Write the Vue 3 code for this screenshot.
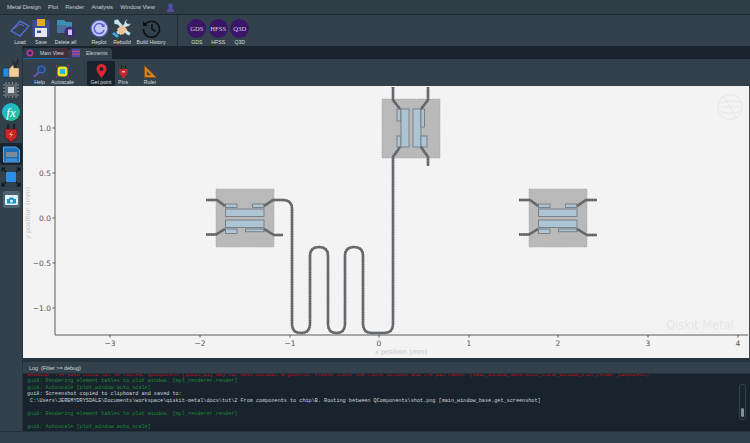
<script setup>
const menus = ['Metal Design', 'Plot', 'Render', 'Analysis', 'Window View']
const xTicks = [[110, '−3'], [200, '−2'], [290, '−1'], [379, '0'], [469, '1'], [558, '2'], [648, '3'], [738, '4']]
const yTicks = [[128, '1.0'], [173, '0.5'], [218, '0.0'], [263, '−0.5'], [308, '−1.0']]
const hQubits = [0, 313]
const route = 'M264 206L273 200H283Q292 200 292 209V324Q292 333 301 333Q310 333 310 324V256Q310 247 319 247Q328 247 328 256V324Q328 333 336.500 333Q345 333 345 324V256Q345 247 354 247Q363 247 363 256V324Q363 333 372 333H384Q393 333 393 324V157L400 147'
const leads = ['M206 200H217L225 206', 'M206 234.500H216L225 229', 'M264 229L274 235H283']
const leadsRight = ['M519 200H530L538 206', 'M519 234.500H529L538 229', 'M577 229L587 235H597', 'M577 206L586 200H597']
const leadsTop = ['M393 87V100L400 109', 'M428 87V100L421 109', 'M421 147L428 157V166']
const allLeads = [route, ...leads, ...leadsRight, ...leadsTop]
const logLines = [
  { c: 'err', t: 'WARNING  The path could not be routed: QComponent [qubit_q1] may not meet minimal arguments. Please check the route options and the pin names: [main_window_base.auto_scale_window_plot_render_component]' },
  { c: 'ok', t: 'gui8: Rendering element tables to plot window. [mpl_renderer.render]' },
  { c: 'ok', t: 'gui8: Autoscale [plot_window.auto_scale]' },
  { c: 'plain', t: 'gui8: Screenshot copied to clipboard and saved to:' },
  { c: 'plain', t: ' C:\\Users\\JEREMYDRYSDALE\\Documents\\workspace\\qiskit-metal\\docs\\tut\\2 From components to chip\\B. Routing between QComponents\\shot.png [main_window_base.get_screenshot]' },
  { c: 'plain', t: '\u00a0' },
  { c: 'ok', t: 'gui8: Rendering element tables to plot window. [mpl_renderer.render]' },
  { c: 'plain', t: '\u00a0' },
  { c: 'ok', t: 'gui8: Autoscale [plot_window.auto_scale]' }
]
</script>

<template>
  <div class="app">
    <nav class="menubar">
      <span v-for="m in menus" :key="m" class="menu">{{ m }}</span>
      <svg class="menu-icon" width="9" height="9" viewBox="0 0 9 9"><circle cx="4.500" cy="3" r="2.400" fill="#4a55a8"/><path d="M1 9Q1 5 4.500 5T8 9Z" fill="#5a4aa0"/></svg>
    </nav>

    <header class="toolbar">
      <div class="tool w21">
        <svg width="20" height="19" viewBox="0 0 20 19"><path d="M1 12L10 2L19 7L10 17Z" fill="none" stroke="#4f6ad0" stroke-width="1.500"/><path d="M4 10L10 5L14 7" fill="none" stroke="#7f62d8"/></svg>
        <span>Load</span>
      </div>
      <div class="tool w21">
        <svg width="18" height="19" viewBox="0 0 18 19"><rect x="0.500" y="1" width="17" height="17" rx="1" fill="#3f4c98"/><rect x="5" y="0" width="8" height="7" fill="#e5a92a"/><rect x="3" y="9" width="12" height="9" fill="#e6e8f2"/><rect x="5" y="11.500" width="4" height="2.500" fill="#3f4c98"/></svg>
        <span>Save</span>
      </div>
      <div class="tool w28">
        <svg width="20" height="19" viewBox="0 0 20 19"><path d="M1 1H8L10 3H16V12H1Z" fill="#3b8fb0"/><path d="M1 14V6H11V14Z" fill="#4a6f9a"/><circle cx="14" cy="13" r="5.500" fill="#3d2a78"/><rect x="12" y="10.500" width="4" height="5.500" fill="#c9c3e8"/></svg>
        <span>Delete all</span>
      </div>
      <div class="tool w24 gap-left">
        <svg width="19" height="19" viewBox="0 0 19 19"><circle cx="9.500" cy="9.500" r="9" fill="#5a5cb0"/><circle cx="9.500" cy="9.500" r="7.800" fill="#c7caf0"/><path d="M13.500 7A5 5 0 1 0 14 11" fill="none" stroke="#4f63d8" stroke-width="1.500"/><path d="M14.500 4.500V8H11Z" fill="#4f63d8"/></svg>
        <span>Replot</span>
      </div>
      <div class="tool w22">
        <svg width="20" height="20" viewBox="0 0 20 20"><path d="M2 2L6 1L8 4L16 13L19 15L17 18L14 16L6 7L2 6Z" fill="#bfe6f2" stroke="#20303c" stroke-width="0.500"/><path d="M16 1Q12 2 12 6L4 14L6 17L14 9Q18 9 19 5L16 6L14 4Z" fill="#cfe2ea" stroke="#20303c" stroke-width="0.500"/><path d="M5 11L10 7L15 11L12 16L8 17Z" fill="#eec39a"/><path d="M2 14L7 18L5 20L0 16Z" fill="#39a8e8"/></svg>
        <span>Rebuild</span>
      </div>
      <div class="tool w36">
        <svg width="19" height="19" viewBox="0 0 19 19"><path d="M3.500 5A8 8 0 1 1 1.500 10" fill="none" stroke="#0c0f12" stroke-width="1.600"/><path d="M1 2L6 7H1Z" fill="#0c0f12"/><path d="M10 5V10L13.500 12.500" fill="none" stroke="#0c0f12" stroke-width="1.500"/></svg>
        <span>Build History</span>
      </div>
      <div class="sep"></div>
      <div class="tool w215"><div class="disc">GDS</div><span>GDS</span></div>
      <div class="tool w215"><div class="disc">HFSS</div><span>HFSS</span></div>
      <div class="tool w215"><div class="disc">Q3D</div><span>Q3D</span></div>
    </header>

    <div class="body">
      <aside class="sidebar">
        <div class="side-item thumb">
          <svg width="17" height="20" viewBox="0 0 17 20"><path d="M10 0V3L12 4.500L14 3V0L16 2V5L14 7V11H11V7L9 5V2Z" fill="#262d34"/><rect x="0" y="10" width="6" height="9" fill="#1c8fe0" stroke="#123" stroke-width="0.500"/><path d="M6 11L10 7L11 10H16V19H6Z" fill="#f2cf9a" stroke="#6e5238" stroke-width="0.500"/></svg>
        </div>
        <div class="side-item chip">
          <svg width="16" height="16" viewBox="0 0 16 16"><path d="M0 3H16M0 6H16M0 9.500H16M0 13H16M3 0V16M6 0V16M9.500 0V16M13 0V16" stroke="#8a8f94" stroke-width="1"/><rect x="2" y="2" width="12" height="12" fill="#5f666c"/><rect x="5" y="5" width="6" height="6" fill="#d6d9dc"/></svg>
        </div>
        <div class="side-item fx">
          <svg width="18" height="18" viewBox="0 0 18 18"><defs><linearGradient id="fxg" x1="0" y1="0" x2="1" y2="1"><stop offset="0" stop-color="#1fb6e0"/><stop offset="1" stop-color="#22c48a"/></linearGradient></defs><circle cx="9" cy="9" r="9" fill="url(#fxg)"/><text x="9" y="13.500" text-anchor="middle" class="fx-text">fx</text></svg>
        </div>
        <div class="side-item plug">
          <svg width="14" height="18" viewBox="0 0 14 18"><path d="M4 0V5M10 0V5" stroke="#222" stroke-width="2.200"/><path d="M1 5H13V14L9 16V18H5V16L1 14Z" fill="#c8242a" stroke="#3a1518" stroke-width="0.600"/><path d="M8 7L5 11H7L6 14L9 10H7Z" fill="#f0c040"/></svg>
        </div>
        <div class="side-item active">
          <svg width="17" height="17" viewBox="0 0 17 17"><path d="M0.500 1H13L16.500 4V16H0.500Z" fill="#1e6fb8" stroke="#5aa8e8"/><rect x="3" y="6" width="11" height="5" fill="#7c8b98"/><rect x="3" y="12.500" width="11" height="3" fill="#3d8fd8"/></svg>
        </div>
        <div class="side-item move">
          <svg width="20" height="20" viewBox="0 0 20 20"><path d="M1 1L6 6M19 1L14 6M1 19L6 14M19 19L14 14" stroke="#10171e" stroke-width="1.300"/><path d="M0.500 0.500H5L0.500 5ZM19.500 0.500H15L19.500 5ZM0.500 19.500H5L0.500 15ZM19.500 19.500H15L19.500 15Z" fill="#10171e"/><rect x="5" y="5" width="10" height="10" fill="#2a8ee8"/></svg>
        </div>
        <div class="side-item cam">
          <svg width="17" height="17" viewBox="0 0 17 17"><rect width="17" height="17" rx="2" fill="#4f6270"/><rect x="2" y="4" width="13" height="10" rx="1" fill="#dff2f8"/><path d="M4 8H6L7 6.500H10L11 8H13V12.500H4Z" fill="#1a93c8"/><circle cx="8.500" cy="10" r="1.500" fill="#dff2f8"/></svg>
        </div>
      </aside>

      <main class="main">
        <div class="tabs">
          <div class="tab tab-on">
            <svg width="8" height="8" viewBox="0 0 8 8"><circle cx="4" cy="4" r="3.500" fill="#b03a8f"/><circle cx="4" cy="4" r="1.800" fill="#3d2060"/></svg>
            <span>Main View</span>
          </div>
          <div class="tab">
            <svg width="8" height="8" viewBox="0 0 8 8"><rect width="8" height="8" fill="#5a4ab0"/><path d="M0 2.500H8M0 5.200H8" stroke="#c04a6a"/></svg>
            <span>Elements</span>
          </div>
        </div>

        <div class="plotbar">
          <div class="ptool w23">
            <svg width="13" height="13" viewBox="0 0 13 13"><circle cx="8.500" cy="4.500" r="3.400" fill="#26457a" stroke="#3f6ac8" stroke-width="1.400"/><path d="M6 7L1 12" stroke="#6f4fb0" stroke-width="2"/></svg>
            <span>Help</span>
          </div>
          <div class="ptool w23">
            <svg width="13" height="13" viewBox="0 0 13 13"><path d="M0 2.500V0H2.500M10.500 0H13V2.500M13 10.500V13H10.500M2.500 13H0V10.500" fill="none" stroke="#a53a78" stroke-width="1.200"/><rect x="1.500" y="1.500" width="10" height="10" rx="3" fill="#f0e020"/><rect x="4" y="4" width="5" height="5" fill="#22b8e8"/></svg>
            <span>Autoscale</span>
          </div>
          <div class="ptool w28 selected">
            <svg width="11" height="14" viewBox="0 0 11 14"><path d="M5.500 14Q0.500 7.500 0.500 5A5 5 0 0 1 10.500 5Q10.500 7.500 5.500 14Z" fill="#e8222e"/><circle cx="5.500" cy="5" r="1.900" fill="#19232d"/></svg>
            <span>Get point</span>
          </div>
          <div class="ptool w16">
            <svg width="9" height="13" viewBox="0 0 9 13"><path d="M2.500 0V4M6.500 0V4" stroke="#222" stroke-width="1.400"/><path d="M0.500 4H8.500V9L6 11V13H3V11L0.500 9Z" fill="#c22a30"/><rect x="3" y="6" width="3" height="1.500" fill="#eab"/></svg>
            <span>Pins</span>
          </div>
          <div class="ptool w38">
            <svg width="13" height="13" viewBox="0 0 13 13"><path d="M0.500 0.500V12.500H12.500ZM3 6.500V10H6.500Z" fill="#d98420" fill-rule="evenodd" stroke="#7a4a10" stroke-width="0.500"/></svg>
            <span>Ruler</span>
          </div>
        </div>

        <div class="plot">
          <svg class="figure" width="726" height="272" viewBox="23 86 726 272">
            <text x="30" y="213" class="axis-title" text-anchor="middle" transform="rotate(-90 30 213)">y position (mm)</text>
            <text x="401" y="354" class="axis-title" text-anchor="middle">x position (mm)</text>
            <text x="734" y="329" class="watermark" text-anchor="end">Qiskit Metal</text>

            <g class="globe">
              <circle cx="730" cy="107" r="12.500"/>
              <path d="M718 103Q730 99 742 103M718 111Q730 115 742 111M719 107H741M724 96L736 118"/>
            </g>

            <path d="M55 86V335H748" fill="none" stroke="#5c5c5c" stroke-width="1"/>
            <g v-for="t in xTicks" :key="t[1]">
              <path :d="`M${t[0]} 335v2.500`" stroke="#555"/>
              <text :x="t[0]" y="345.500" class="tick" text-anchor="middle">{{ t[1] }}</text>
            </g>
            <g v-for="t in yTicks" :key="t[1]">
              <path :d="`M55 ${t[0]}h-2.500`" stroke="#555"/>
              <text x="51" :y="t[0] + 2.700" class="tick" text-anchor="end">{{ t[1] }}</text>
            </g>

            <g v-for="dx in hQubits" :key="dx" :transform="`translate(${dx} 0)`">
              <rect x="216" y="189" width="58" height="58" class="pocket"/>
              <rect x="225.500" y="204" width="11.500" height="3.500" class="pad"/>
              <rect x="252.500" y="204" width="11.500" height="3.500" class="pad"/>
              <rect x="225.500" y="209" width="38.500" height="7.500" class="pad"/>
              <rect x="225.500" y="220" width="38.500" height="7.500" class="pad"/>
              <rect x="225.500" y="229" width="11.500" height="4.500" class="pad"/>
              <rect x="245.500" y="229" width="18.500" height="2.800" class="pad"/>
            </g>
            <rect x="382" y="99" width="58" height="59" class="pocket"/>
            <rect x="397" y="109" width="4" height="12" class="pad"/>
            <rect x="397" y="136" width="4" height="11" class="pad"/>
            <rect x="401" y="109" width="8" height="38" class="pad"/>
            <rect x="413" y="109" width="8" height="38" class="pad"/>
            <rect x="421" y="109" width="3.500" height="18" class="pad"/>
            <rect x="421" y="136" width="6" height="11" class="pad"/>

            <g fill="none">
              <path v-for="(d, i) in allLeads" :key="'a' + i" :d="d" class="wire"/>
              <path v-for="(d, i) in allLeads" :key="'b' + i" :d="d" class="wire-dash"/>
            </g>
          </svg>
        </div>

        <div class="strip"></div>
        <div class="loghead"><span>Log&nbsp; (Filter &gt;= debug)</span></div>
        <div class="logbody">
          <div class="loglines">
            <div v-for="(l, i) in logLines" :key="i" class="logline" :class="l.c">{{ l.t }}</div>
          </div>
          <div class="scroll"><div class="thumbbar"></div></div>
        </div>
      </main>
    </div>
    <footer class="status"></footer>
  </div>
</template>

<style>
html, body { margin: 0; background: #32414b; }
</style>

<style scoped>
.app {
  width: 750px;
  height: 443px;
  overflow: hidden;
  display: flex;
  flex-direction: column;
  background: #32414b;
  font-family: "Liberation Sans", Arial, sans-serif;
  color: #e0e1e3;
}
.menubar {
  height: 14px;
  flex: none;
  display: flex;
  align-items: center;
  padding-left: 7px;
  gap: 7.200px;
  font-size: 5.800px;
  color: #c9ced2;
  background: #2f3d47;
}
.menu-icon { margin-left: 4px; }
.toolbar {
  height: 32px;
  flex: none;
  display: flex;
  padding-left: 9.500px;
  box-sizing: border-box;
  border-top: 1px solid #1f2a33;
  background: #32414b;
}
.tool, .ptool {
  display: flex;
  flex-direction: column;
  align-items: center;
  justify-content: flex-end;
  font-size: 5.200px;
  line-height: 6px;
  color: #d9dcdf;
  gap: 1px;
  padding-bottom: 1px;
  box-sizing: border-box;
  white-space: nowrap;
}
.w21 { width: 21px; }
.w22 { width: 22px; }
.w24 { width: 24px; }
.w28 { width: 28px; }
.w36 { width: 36px; }
.w215 { width: 21.500px; }
.w23 { width: 23px; }
.w16 { width: 16px; }
.w38 { width: 38px; }
.gap-left { margin-left: 7.500px; }
.sep {
  width: 1px;
  margin: 0 8px;
  background: #1f2a33;
}
.disc {
  width: 19px;
  height: 19px;
  border-radius: 50%;
  background: #3b1668;
  color: #d8d0e4;
  font-family: "Liberation Serif", serif;
  font-size: 6.600px;
  display: flex;
  align-items: center;
  justify-content: center;
}
.body {
  flex: 1;
  display: flex;
  min-height: 0;
}
.sidebar {
  width: 23px;
  flex: none;
  display: flex;
  flex-direction: column;
  align-items: center;
  padding-top: 11px;
  box-sizing: border-box;
  background: #32414b;
  border-right: 1px solid #26323b;
}
.side-item {
  display: flex;
  justify-content: center;
  align-items: center;
  width: 22px;
}
.thumb { height: 21px; }
.chip { height: 23px; }
.fx { height: 21px; }
.plug { height: 21px; }
.active {
  height: 22px;
  background: #19232d;
  border-radius: 2px;
}
.move { height: 23px; }
.cam { height: 22px; }
.fx-text {
  font-family: "Liberation Serif", serif;
  font-style: italic;
  font-size: 13px;
  fill: #fff;
}
.main {
  flex: 1;
  min-width: 0;
  display: flex;
  flex-direction: column;
}
.tabs {
  height: 13px;
  flex: none;
  display: flex;
  align-items: flex-end;
  background: #19232d;
}
.tab {
  height: 11.500px;
  width: 43px;
  display: flex;
  align-items: center;
  gap: 6px;
  padding-left: 3px;
  box-sizing: border-box;
  font-size: 5.200px;
  background: #32414b;
  border-radius: 3px 3px 0 0;
  color: #cfd3d6;
}
.tab-on {
  width: 46px;
  background: linear-gradient(90deg, #2c3a45 50%, #4a2a38 100%);
  border-bottom: 1.500px solid #1464a0;
}
.plotbar {
  height: 27px;
  flex: none;
  display: flex;
  padding: 1px 0 0 5px;
  box-sizing: border-box;
  background: #32414b;
}
.selected {
  background: #19232d;
  border-radius: 2px;
  margin: 1px 0 0 13px;
}
.plot {
  height: 272px;
  flex: none;
  background: #f3f3f3;
  border-right: 1px solid #3a4853;
}
.figure { display: block; }
.globe {
  fill: none;
  stroke: #e8e8e8;
  stroke-width: 1;
}
.axis-title {
  font-family: "DejaVu Sans", sans-serif;
  font-size: 6.600px;
  fill: #c4c4c4;
}
.tick {
  font-family: "DejaVu Sans", sans-serif;
  font-size: 7.500px;
  fill: #555;
}
.watermark {
  font-family: "DejaVu Sans", sans-serif;
  font-size: 11.500px;
  fill: #e6e6e6;
}
.pocket {
  fill: #b9b9b9;
  stroke: #a6a6a6;
  stroke-width: 0.700;
  stroke-dasharray: 1.500 1;
}
.pad {
  fill: #adc4d4;
  stroke: #6a7379;
  stroke-width: 0.800;
}
.wire {
  stroke: #6a6e72;
  stroke-width: 2.500;
}
.wire-dash {
  stroke: #606367;
  stroke-width: 2.500;
  stroke-dasharray: 1 1.400;
}
.strip {
  height: 4px;
  flex: none;
  background: #26333d;
}
.loghead {
  height: 12px;
  flex: none;
  display: flex;
  align-items: center;
  padding-left: 6px;
  font-size: 5.400px;
  color: #d5d8db;
  background: #32414b;
  border-bottom: 1px solid #26323b;
  box-sizing: border-box;
}
.logbody {
  height: 57px;
  flex: none;
  display: flex;
  justify-content: space-between;
  background: #19232d;
  overflow: hidden;
}
.loglines {
  margin-top: -2px;
  padding-left: 4px;
  font-family: "Liberation Mono", monospace;
  font-size: 5.170px;
  line-height: 6.450px;
  white-space: pre;
  width: 700px;
}
.logline { height: 6.450px; }
.err { color: #c01020; }
.ok { color: #1c8a2e; }
.plain { color: #cfd3d6; }
.scroll {
  width: 7px;
  height: 36px;
  margin: 10px 4px 0 0;
  flex: none;
  position: relative;
  border: 1px solid #32414b;
  border-radius: 3px;
  box-sizing: border-box;
}
.thumbbar {
  position: absolute;
  left: 1px;
  right: 1px;
  bottom: 2px;
  height: 9px;
  border-radius: 2px;
  background: #8a8f94;
}
.status {
  height: 12px;
  flex: none;
  background: #32414b;
  border-top: 1px solid #26323b;
  box-sizing: border-box;
}
</style>
